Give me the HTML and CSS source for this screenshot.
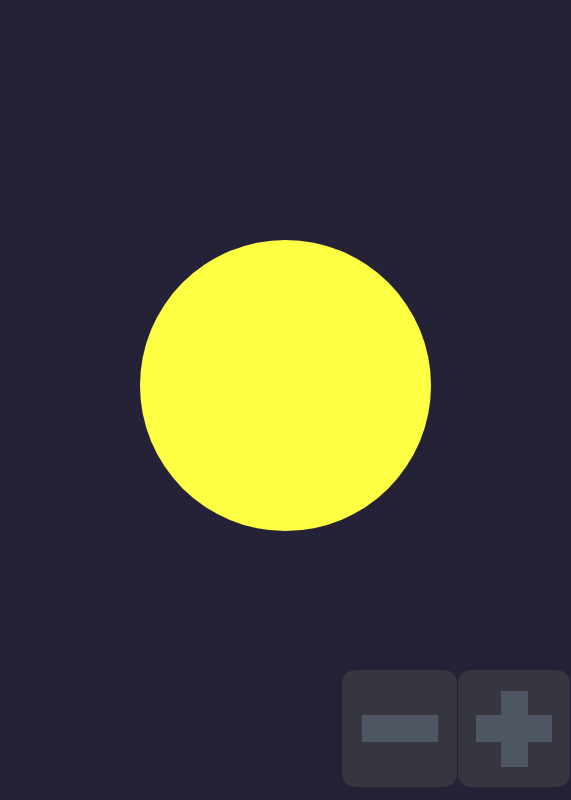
FILE: index.html
```html
<!DOCTYPE html>
<html>
<head>
<meta charset="utf-8">
<link rel="stylesheet" href="styles.css">
</head>
<body>
<main class="stage">
  <div class="sun"></div>
</main>
<div class="zoom-controls">
  <button class="zbtn zbtn-minus" aria-label="Zoom out"><span class="bar-h"></span></button>
  <button class="zbtn zbtn-plus" aria-label="Zoom in"><span class="bar-h"></span><span class="bar-v"></span></button>
</div>
</body>
</html>
```
FILE: styles.css
```css
html, body {
  margin: 0;
  padding: 0;
  background: #252238;
  width: 571px;
  height: 800px;
  overflow: hidden;
}
.stage {
  height: 771px;
  display: flex;
  align-items: center;
  justify-content: center;
}
.sun {
  width: 291px;
  height: 291px;
  border-radius: 50%;
  background: #ffff44;
}
.zoom-controls {
  position: absolute;
  right: 1px;
  bottom: 13px;
  display: flex;
  gap: 1px;
}
.zbtn {
  position: relative;
  height: 117px;
  border: none;
  padding: 0;
  margin: 0;
  border-radius: 13px;
  background: #35363f;
  display: flex;
  align-items: center;
  justify-content: center;
}
.zbtn-minus { width: 115px; }
.zbtn-plus { width: 112px; }
.bar-h {
  display: block;
  width: 76px;
  height: 27px;
  background: #4e5563;
}
.bar-v {
  position: absolute;
  left: 50%;
  top: 50%;
  width: 27px;
  height: 76px;
  margin-left: -13.5px;
  margin-top: -38px;
  background: #4e5563;
}
```
